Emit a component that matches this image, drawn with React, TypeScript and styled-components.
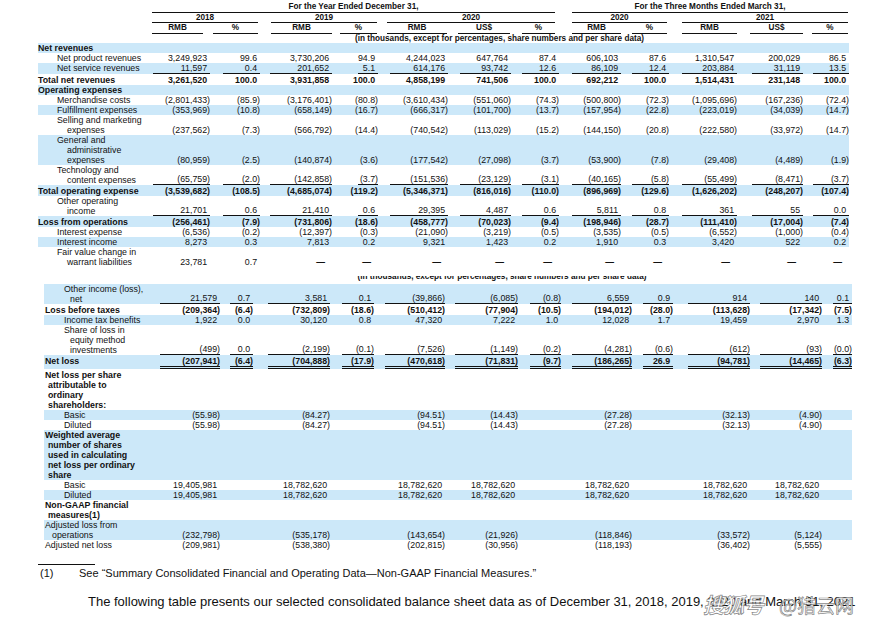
import React from 'react';
import styled, { createGlobalStyle } from 'styled-components';

const BAND = '#cce8f9';

const GlobalStyle = createGlobalStyle`
  html, body { margin: 0; padding: 0; background: #fff; }
  body {
    font-family: "Liberation Sans", Arial, Helvetica, sans-serif;
    color: #111;
    width: 880px;
    height: 624px;
    overflow: hidden;
  }
`;

const Page = styled.div`
  position: relative;
  width: 880px;
  height: 624px;
  padding-top: 2px;
  box-sizing: border-box;
  overflow: hidden;
`;

const Section = styled.div<{ $left: number; $width: number }>`
  margin-left: ${(p) => p.$left}px;
  width: ${(p) => p.$width}px;
  display: flex;
  flex-direction: column;
`;

const HeadRow = styled.div<{ $tpl: string }>`
  display: grid;
  grid-template-columns: ${(p) => p.$tpl};
  font-size: 8.2px;
  font-weight: bold;
  line-height: 8.5px;
`;

const HeadCell = styled.div<{ $from: number; $to: number; $ml: number; $mr: number; $rule?: boolean }>`
  grid-column: ${(p) => p.$from} / ${(p) => p.$to};
  margin-left: ${(p) => p.$ml}px;
  margin-right: ${(p) => p.$mr}px;
  padding-top: 1px;
  text-align: center;
  white-space: nowrap;
  border-bottom: ${(p) => (p.$rule ? '1px solid #111' : '1px solid transparent')};
`;

const UnitsCell = styled.div`
  grid-column: 2 / 14;
  text-align: center;
  line-height: 9.5px;
  white-space: nowrap;
`;

const ClipRow = styled.div`
  height: 5px;
  margin: 9px 0 3px;
  overflow: hidden;
  display: flex;
  align-items: flex-end;
  justify-content: center;
  padding-left: 124px;
  font-size: 8.2px;
  font-weight: bold;
  line-height: 9px;
  white-space: nowrap;
`;

const Row = styled.div<{ $tpl: string; $band?: boolean; $pt?: number; $mt?: number }>`
  display: grid;
  grid-template-columns: ${(p) => p.$tpl};
  background: ${(p) => (p.$band ? BAND : 'transparent')};
  padding-top: ${(p) => p.$pt ?? 0}px;
  margin-top: ${(p) => p.$mt ?? 0}px;
  font-size: 8.8px;
  line-height: 10px;
`;

const LabelCell = styled.div<{ $indent: number; $hang: number; $bold?: boolean }>`
  padding-left: ${(p) => p.$indent + p.$hang}px;
  text-indent: -${(p) => p.$hang}px;
  font-weight: ${(p) => (p.$bold ? 'bold' : 'normal')};
  white-space: nowrap;
`;

const NumCell = styled.div<{ $ml: number; $line?: 'single' | 'double'; $bold?: boolean }>`
  display: flex;
  justify-content: flex-end;
  align-items: flex-end;
  margin-left: ${(p) => p.$ml}px;
  white-space: nowrap;
  font-weight: ${(p) => (p.$bold ? 'bold' : 'normal')};
  border-bottom: ${(p) =>
    p.$line === 'single' ? '1px solid #111' : p.$line === 'double' ? '3px double #111' : 'none'};
`;

const Val = styled.span<{ $kind: 'neg' | 'pos' | 'dash' }>`
  padding-right: ${(p) => (p.$kind === 'pos' ? '0.333em' : p.$kind === 'dash' ? '7px' : '0')};
  font-weight: ${(p) => (p.$kind === 'dash' ? 'bold' : 'inherit')};
`;

const FootRule = styled.div`
  width: 57px;
  margin: 14px 0 0 38px;
  border-top: 1px solid #111;
`;

const FootNote = styled.div`
  display: flex;
  margin: 2px 0 0 40px;
  font-size: 11px;
  line-height: 13px;
  white-space: nowrap;
`;

const FootMark = styled.span`
  width: 39px;
`;

const Para = styled.p`
  margin: 14px 0 0 88px;
  font-size: 13px;
  line-height: 15px;
  white-space: nowrap;
`;

const Watermark = styled.div`
  position: absolute;
  left: 703px;
  top: 589px;
  display: flex;
  align-items: center;
  gap: 16px;
  color: rgba(255, 255, 255, 0.9);
  -webkit-text-stroke: 0.7px rgba(90, 90, 90, 0.75);
  font-family: "Noto Sans CJK SC", sans-serif;
  white-space: nowrap;
`;

const WmLogo = styled.span`
  font-size: 21px;
  font-weight: bold;
  font-style: italic;
  letter-spacing: -1px;
`;

const WmName = styled.span`
  font-size: 19px;
`;

type Line = 'single' | 'double' | undefined;

interface RowDef {
  label: string[];
  bold?: boolean;
  band?: boolean;
  indent: number;
  hang: number;
  vals?: string[];
  line?: Line;
  pt?: number;
  mt?: number;
}

const TPL1 = '112px 60px 50px 72px 46px 70px 63px 48px 62px 48px 68px 66px 46px';
const ML1 = [3, 13, 10, 26, 12, 12, 11, 13, 11, 13, 15, 10];
const TPL2 = '106px 70px 33px 77px 44px 71px 73px 43px 71px 41px 77px 72px 30px';
const ML2 = [10, 10, 15, 12, 11, 10, 12, 11, 11, 15, 10, 11];

const D = '—';

const rows1: RowDef[] = [
  { label: ['Net revenues'], bold: true, band: true, indent: 0, hang: 0 },
  {
    label: ['Net product revenues'], indent: 19, hang: 10,
    vals: ['3,249,923', '99.6', '3,730,206', '94.9', '4,244,023', '647,764', '87.4', '606,103', '87.6', '1,310,547', '200,029', '86.5'],
  },
  {
    label: ['Net service revenues'], band: true, indent: 19, hang: 10, line: 'single',
    vals: ['11,597', '0.4', '201,652', '5.1', '614,176', '93,742', '12.6', '86,109', '12.4', '203,884', '31,119', '13.5'],
  },
  {
    label: ['Total net revenues'], bold: true, indent: 0, hang: 0, pt: 1,
    vals: ['3,261,520', '100.0', '3,931,858', '100.0', '4,858,199', '741,506', '100.0', '692,212', '100.0', '1,514,431', '231,148', '100.0'],
  },
  { label: ['Operating expenses'], bold: true, band: true, indent: 0, hang: 0 },
  {
    label: ['Merchandise costs'], indent: 19, hang: 10,
    vals: ['(2,801,433)', '(85.9)', '(3,176,401)', '(80.8)', '(3,610,434)', '(551,060)', '(74.3)', '(500,800)', '(72.3)', '(1,095,696)', '(167,236)', '(72.4)'],
  },
  {
    label: ['Fulfillment expenses'], band: true, indent: 19, hang: 10,
    vals: ['(353,969)', '(10.8)', '(658,149)', '(16.7)', '(666,317)', '(101,700)', '(13.7)', '(157,954)', '(22.8)', '(223,019)', '(34,039)', '(14.7)'],
  },
  {
    label: ['Selling and marketing', 'expenses'], indent: 19, hang: 10,
    vals: ['(237,562)', '(7.3)', '(566,792)', '(14.4)', '(740,542)', '(113,029)', '(15.2)', '(144,150)', '(20.8)', '(222,580)', '(33,972)', '(14.7)'],
  },
  {
    label: ['General and', 'administrative', 'expenses'], band: true, indent: 19, hang: 10,
    vals: ['(80,959)', '(2.5)', '(140,874)', '(3.6)', '(177,542)', '(27,098)', '(3.7)', '(53,900)', '(7.8)', '(29,408)', '(4,489)', '(1.9)'],
  },
  {
    label: ['Technology and', 'content expenses'], indent: 19, hang: 10, line: 'single',
    vals: ['(65,759)', '(2.0)', '(142,858)', '(3.7)', '(151,536)', '(23,129)', '(3.1)', '(40,165)', '(5.8)', '(55,499)', '(8,471)', '(3.7)'],
  },
  {
    label: ['Total operating expense'], bold: true, band: true, indent: 0, hang: 0, pt: 1,
    vals: ['(3,539,682)', '(108.5)', '(4,685,074)', '(119.2)', '(5,346,371)', '(816,016)', '(110.0)', '(896,969)', '(129.6)', '(1,626,202)', '(248,207)', '(107.4)'],
  },
  {
    label: ['Other operating', 'income'], indent: 19, hang: 10, line: 'single',
    vals: ['21,701', '0.6', '21,410', '0.6', '29,395', '4,487', '0.6', '5,811', '0.8', '361', '55', '0.0'],
  },
  {
    label: ['Loss from operations'], bold: true, band: true, indent: 0, hang: 0, pt: 1,
    vals: ['(256,461)', '(7.9)', '(731,806)', '(18.6)', '(458,777)', '(70,023)', '(9.4)', '(198,946)', '(28.7)', '(111,410)', '(17,004)', '(7.4)'],
  },
  {
    label: ['Interest expense'], indent: 19, hang: 10,
    vals: ['(6,536)', '(0.2)', '(12,397)', '(0.3)', '(21,090)', '(3,219)', '(0.5)', '(3,535)', '(0.5)', '(6,552)', '(1,000)', '(0.4)'],
  },
  {
    label: ['Interest income'], band: true, indent: 19, hang: 10,
    vals: ['8,273', '0.3', '7,813', '0.2', '9,321', '1,423', '0.2', '1,910', '0.3', '3,420', '522', '0.2'],
  },
  {
    label: ['Fair value change in', 'warrant liabilities'], indent: 19, hang: 10,
    vals: ['23,781', '0.7', D, D, D, D, D, D, D, D, D, D],
  },
];

const rows2: RowDef[] = [
  {
    label: ['Other income (loss),', 'net'], band: true, indent: 20, hang: 6, line: 'single',
    vals: ['21,579', '0.7', '3,581', '0.1', '(39,866)', '(6,085)', '(0.8)', '6,559', '0.9', '914', '140', '0.1'],
  },
  {
    label: ['Loss before taxes'], bold: true, indent: 1, hang: 0, pt: 1,
    vals: ['(209,364)', '(6.4)', '(732,809)', '(18.6)', '(510,412)', '(77,904)', '(10.5)', '(194,012)', '(28.0)', '(113,628)', '(17,342)', '(7.5)'],
  },
  {
    label: ['Income tax benefits'], band: true, indent: 20, hang: 6,
    vals: ['1,922', '0.0', '30,120', '0.8', '47,320', '7,222', '1.0', '12,028', '1.7', '19,459', '2,970', '1.3'],
  },
  {
    label: ['Share of loss in', 'equity method', 'investments'], indent: 20, hang: 6, line: 'single',
    vals: ['(499)', '0.0', '(2,199)', '(0.1)', '(7,526)', '(1,149)', '(0.2)', '(4,281)', '(0.6)', '(612)', '(93)', '(0.0)'],
  },
  {
    label: ['Net loss'], bold: true, band: true, indent: 1, hang: 0, pt: 1, line: 'double',
    vals: ['(207,941)', '(6.4)', '(704,888)', '(17.9)', '(470,618)', '(71,831)', '(9.7)', '(186,265)', '26.9', '(94,781)', '(14,465)', '(6.3)'],
  },
  {
    label: ['Net loss per share', 'attributable to', 'ordinary', 'shareholders:'], bold: true, indent: 1, hang: 3, mt: 1,
  },
  {
    label: ['Basic'], band: true, indent: 20, hang: 6,
    vals: ['(55.98)', '', '(84.27)', '', '(94.51)', '(14.43)', '', '(27.28)', '', '(32.13)', '(4.90)', ''],
  },
  {
    label: ['Diluted'], indent: 20, hang: 6,
    vals: ['(55.98)', '', '(84.27)', '', '(94.51)', '(14.43)', '', '(27.28)', '', '(32.13)', '(4.90)', ''],
  },
  {
    label: ['Weighted average', 'number of shares', 'used in calculating', 'net loss per ordinary', 'share'],
    bold: true, band: true, indent: 1, hang: 3,
  },
  {
    label: ['Basic'], indent: 20, hang: 6,
    vals: ['19,405,981', '', '18,782,620', '', '18,782,620', '18,782,620', '', '18,782,620', '', '18,782,620', '18,782,620', ''],
  },
  {
    label: ['Diluted'], band: true, indent: 20, hang: 6,
    vals: ['19,405,981', '', '18,782,620', '', '18,782,620', '18,782,620', '', '18,782,620', '', '18,782,620', '18,782,620', ''],
  },
  { label: ['Non-GAAP financial', 'measures(1)'], bold: true, indent: 1, hang: 3 },
  {
    label: ['Adjusted loss from', 'operations'], band: true, indent: 1, hang: 7,
    vals: ['(232,798)', '', '(535,178)', '', '(143,654)', '(21,926)', '', '(118,846)', '', '(33,572)', '(5,124)', ''],
  },
  {
    label: ['Adjusted net loss'], indent: 1, hang: 7,
    vals: ['(209,981)', '', '(538,380)', '', '(202,815)', '(30,956)', '', '(118,193)', '', '(36,402)', '(5,555)', ''],
  },
];

const kindOf = (v: string): 'neg' | 'pos' | 'dash' =>
  v === D ? 'dash' : v.startsWith('(') ? 'neg' : 'pos';

function TableRow({ def, tpl, ml }: { def: RowDef; tpl: string; ml: number[] }) {
  const vals = def.vals ?? Array(12).fill('');
  return (
    <Row $tpl={tpl} $band={def.band} $pt={def.pt} $mt={def.mt}>
      <LabelCell $indent={def.indent} $hang={def.hang} $bold={def.bold}>
        {def.label.map((l, i) => (
          <React.Fragment key={i}>
            {i > 0 && <br />}
            {l}
          </React.Fragment>
        ))}
      </LabelCell>
      {vals.map((v, i) => (
        <NumCell key={i} $ml={ml[i]} $line={def.vals ? def.line : undefined} $bold={def.bold}>
          {v !== '' && <Val $kind={kindOf(v)}>{v}</Val>}
        </NumCell>
      ))}
    </Row>
  );
}

const sub = [
  { t: 'RMB', ml: 2, mr: 7 },
  { t: '%', ml: 3, mr: 2 },
  { t: 'RMB', ml: 11, mr: 0 },
  { t: '%', ml: 8, mr: 1 },
  { t: 'RMB', ml: 9, mr: 1 },
  { t: 'US$', ml: 10, mr: 1 },
  { t: '%', ml: 11, mr: 4 },
  { t: 'RMB', ml: 13, mr: 0 },
  { t: '%', ml: 11, mr: 2 },
  { t: 'RMB', ml: 13, mr: 0 },
  { t: 'US$', ml: 13, mr: 0 },
  { t: '%', ml: 9, mr: 1 },
];

export default function App() {
  return (
    <Page>
      <GlobalStyle />
      <Section $left={38} $width={811}>
        <HeadRow $tpl={TPL1}>
          <HeadCell $from={2} $to={9} $ml={2} $mr={4} $rule>
            For the Year Ended December 31,
          </HeadCell>
          <HeadCell $from={9} $to={14} $ml={13} $mr={1} $rule>
            For the Three Months Ended March 31,
          </HeadCell>
        </HeadRow>
        <HeadRow $tpl={TPL1}>
          <HeadCell $from={2} $to={4} $ml={2} $mr={2} $rule>2018</HeadCell>
          <HeadCell $from={4} $to={6} $ml={11} $mr={1} $rule>2019</HeadCell>
          <HeadCell $from={6} $to={9} $ml={9} $mr={4} $rule>2020</HeadCell>
          <HeadCell $from={9} $to={11} $ml={13} $mr={2} $rule>2020</HeadCell>
          <HeadCell $from={11} $to={14} $ml={13} $mr={1} $rule>2021</HeadCell>
        </HeadRow>
        <HeadRow $tpl={TPL1}>
          {sub.map((s, i) => (
            <HeadCell key={i} $from={i + 2} $to={i + 3} $ml={s.ml} $mr={s.mr} $rule>
              {s.t}
            </HeadCell>
          ))}
        </HeadRow>
        <HeadRow $tpl={TPL1}>
          <UnitsCell>(in thousands, except for percentages, share numbers and per share data)</UnitsCell>
        </HeadRow>
        {rows1.map((r, i) => (
          <TableRow key={i} def={r} tpl={TPL1} ml={ML1} />
        ))}
      </Section>

      <ClipRow>(in thousands, except for percentages, share numbers and per share data)</ClipRow>

      <Section $left={44} $width={808}>
        {rows2.map((r, i) => (
          <TableRow key={i} def={r} tpl={TPL2} ml={ML2} />
        ))}
      </Section>

      <FootRule />
      <FootNote>
        <FootMark>(1)</FootMark>
        <span>See “Summary Consolidated Financial and Operating Data—Non-GAAP Financial Measures.”</span>
      </FootNote>
      <Para>
        The following table presents our selected consolidated balance sheet data as of December 31, 2018, 2019, 2020 and March 31, 2021
      </Para>
      <Watermark>
        <WmLogo>搜狐号</WmLogo>
        <WmName>@猎云网</WmName>
      </Watermark>
    </Page>
  );
}
